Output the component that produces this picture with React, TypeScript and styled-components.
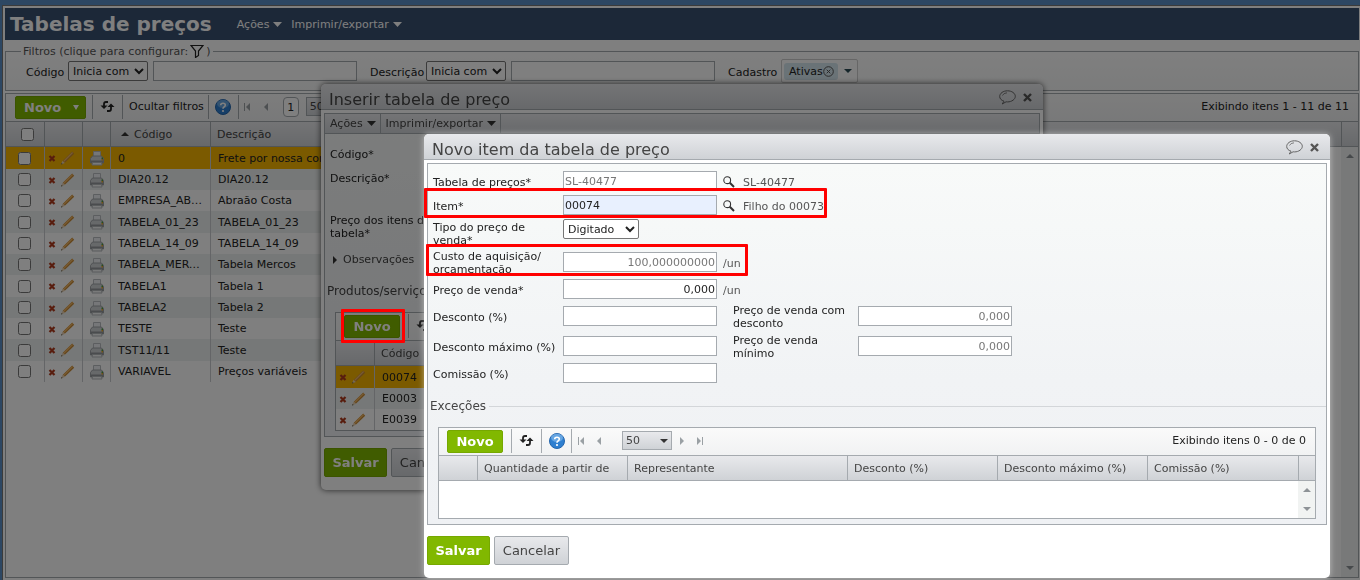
import React from "react";
import styled, { createGlobalStyle, css } from "styled-components";

const line = "#a5aaaf";
const barGradient = "linear-gradient(#e8e9ec, #cfd2d6)";

const GlobalStyle = createGlobalStyle`
  * { box-sizing: border-box; }
  body {
    margin: 0;
    overflow: hidden;
    background: #fff;
    color: #222;
    font: 11px/13px "DejaVu Sans", Verdana, sans-serif;
  }
  button, input, select { font: inherit; color: inherit; }
  input[type="checkbox"] { width: 13px; height: 13px; margin: 0; display: block; }
`;

/* ---------- shared parts ---------- */

const GreenButton = styled.button<{ $big?: boolean; $wide?: boolean }>`
  display: flex;
  align-items: center;
  justify-content: ${(p) => (p.$wide ? "space-between" : "center")};
  width: ${(p) => (p.$big ? 63 : p.$wide ? 71 : 56)}px;
  height: ${(p) => (p.$big ? 29 : 23)}px;
  padding: 0 ${(p) => (p.$wide ? 6 : 0)}px 0 ${(p) => (p.$wide ? 8 : 0)}px;
  border: 1px solid #76a800;
  border-radius: 2px;
  background: #81b800;
  color: #fff;
  font-size: 13px;
  font-weight: bold;
`;

const PlainButton = styled.button`
  width: 75px;
  height: 29px;
  padding: 0;
  border: 1px solid ${line};
  border-radius: 2px;
  background: ${barGradient};
  color: #444;
  font-size: 13px;
`;

const IconButton = styled.button<{ $w?: number }>`
  display: flex;
  align-items: center;
  justify-content: center;
  width: ${(p) => p.$w ?? 17}px;
  height: 22px;
  padding: 0;
  border: 0;
  background: none;
`;

const Toolbar = styled.div`
  display: flex;
  align-items: center;
  height: 27px;
  background: linear-gradient(#fafafa, #f1f2f3);
`;

const ToolGroup = styled.div<{ $pad?: string }>`
  display: flex;
  align-items: center;
  height: 24px;
  margin-bottom: 2px;
  padding: ${(p) => p.$pad ?? "0 6px"};
  border-left: 1px solid ${line};
`;

const ToolStart = styled.div<{ $main?: boolean }>`
  padding: ${(p) => (p.$main ? "0 6px 0 9px" : "0 8px")};
`;

const Counter = styled.span`
  margin-left: auto;
  padding: 0 9px 2px 0;
`;

const PageSize = styled.label<{ $gap: number }>`
  position: relative;
  display: flex;
  width: 50px;
  height: 19px;
  margin: 0 3px 0 ${(p) => p.$gap}px;

  select {
    width: 100%;
    padding: 0 0 0 3px;
    appearance: none;
    border: 1px solid ${line};
    border-radius: 0;
    background: ${barGradient};
    color: #444;
  }
  svg {
    position: absolute;
    right: 4px;
    top: 8px;
    pointer-events: none;
  }
`;

const Grid = styled.div<{ $fill?: boolean }>`
  display: flex;
  flex-direction: column;
  border: 1px solid ${line};
  background: #fff;
  ${(p) => p.$fill && css`flex: 1;`}
`;

const GridBody = styled.div<{ $h?: number }>`
  display: flex;
  align-items: flex-start;
  flex: 1;
  ${(p) => p.$h && css`min-height: ${p.$h}px;`}
`;

const Table = styled.table`
  flex: 1;
  width: 100%;
  table-layout: fixed;
  border-collapse: separate;
  border-spacing: 0;

  th {
    height: 26px;
    padding: 0 0 0 6px;
    border: solid ${line};
    border-width: 1px 1px 1px 0;
    background: ${barGradient};
    color: #444;
    font-weight: normal;
    text-align: left;
  }
  th:last-child { border-right: 0; }
  td {
    height: 21px;
    padding: 0 6px 0 7px;
    border-right: 1px solid #c8cbce;
    overflow: hidden;
    text-overflow: ellipsis;
    white-space: nowrap;
  }
  tbody tr:nth-child(3n + 1) td { height: 22px; }
  tbody tr:nth-child(even) td:not(:empty) { background: #edf1f0; }
  tbody tr:first-child td:not(:empty) { background: #f7b500; }
  td:last-child { border-right: 0; }
`;

const ActionCell = styled.td<{ $left: number }>`
  && { padding: 0 0 0 ${(p) => p.$left}px; }
`;

const ScrollColumn = styled.div`
  display: flex;
  flex-direction: column;
  align-self: stretch;
  width: 17px;
`;

const ScrollCap = styled.div`
  height: 26px;
  border: solid ${line};
  border-width: 1px 0 1px 1px;
  background: ${barGradient};
`;

const ScrollTrack = styled.div`
  display: flex;
  flex: 1;
  flex-direction: column;
  align-items: center;
  justify-content: space-between;
  padding: 7px 0;
  background: #f1f3f2;
`;

const Actions = styled.span<{ $left?: number }>`
  display: flex;
  align-items: center;
  gap: 5px;
  margin-left: ${(p) => p.$left ?? 0}px;
`;

const TextBox = styled.input<{ $soft?: boolean; $number?: boolean; $filled?: boolean }>`
  width: 154px;
  height: 20px;
  padding: 0 1px;
  border: 1px solid ${line};
  background: ${(p) => (p.$filled ? "#e8f0fe" : "#fff")};
  color: ${(p) => (p.$soft ? "#777" : "#222")};
  text-align: ${(p) => (p.$number ? "right" : "left")};
`;

const Select = styled.select<{ $w: number }>`
  width: ${(p) => p.$w}px;
  height: 20px;
  padding: 0;
  border: 1px solid #767676;
  border-radius: 2px;
  background: #fff;
`;

/* ---------- icons ---------- */

const Triangle = ({ dir, w = 8, color = "#333" }: { dir: "up" | "down" | "left" | "right"; w?: number; color?: string }) => {
  const h = w / 2;
  const flat = dir === "up" || dir === "down";
  const points = {
    up: `0,${h} ${h},0 ${w},${h}`,
    down: `0,0 ${w},0 ${h},${h}`,
    left: `${h},0 ${h},${w} 0,${h}`,
    right: `0,0 ${h},${h} 0,${w}`,
  }[dir];
  return (
    <svg width={flat ? w : h} height={flat ? h : w} aria-hidden="true">
      <polygon points={points} fill={color} />
    </svg>
  );
};

const MenuArrow = ({ color = "#333", w = 9 }: { color?: string; w?: number }) => (
  <svg width={w} height="5" viewBox="0 0 9 5" preserveAspectRatio="none" aria-hidden="true">
    <polygon points="0,0 9,0 4.500,5" fill={color} />
  </svg>
);

const EdgeArrow = ({ last }: { last?: boolean }) => (
  <svg width="7" height="8" aria-hidden="true">
    {last ? <path d="M0 0l4 4-4 4zM5 0h1v8H5z" fill="#9aa0a4" /> : <path d="M6 0L2 4l4 4zM0 0h1v8H0z" fill="#9aa0a4" />}
  </svg>
);

const RefreshIcon = () => (
  <svg width="15" height="11" viewBox="0 0 15 11" fill="none" stroke="#222" strokeWidth="1.800" aria-hidden="true">
    <path d="M8 1H6Q4 1 4 3v4" />
    <path d="M0.500 4.500L4 8l3.500-3.500" fill="#222" stroke="none" />
    <path d="M7 10h2q2 0 2-2V4" />
    <path d="M7.500 6L11 2.500 14.500 6" fill="#222" stroke="none" />
  </svg>
);

const HelpIcon = () => (
  <svg width="16" height="16" viewBox="0 0 16 16" aria-hidden="true">
    <circle cx="8" cy="8" r="7.500" fill="#2f7fd0" stroke="#2566ad" />
    <ellipse cx="8" cy="4.800" rx="6" ry="4" fill="#8cc0f0" opacity=".6" />
    <path d="M5.700 6.200Q5.700 4.200 8 4.200t2.300 1.900Q10.300 7.300 9 8q-1 .5-1 1.700" fill="none" stroke="#fff" strokeWidth="1.600" />
    <circle cx="8" cy="12" r="1.100" fill="#fff" />
  </svg>
);

const DeleteIcon = () => (
  <svg width="8" height="8" viewBox="0 0 8 8" aria-hidden="true">
    <path d="M1.500 2l5 5M6.500 2l-5 5" stroke="#b03a1c" strokeWidth="2.200" />
  </svg>
);

const PencilIcon = () => (
  <svg width="14" height="14" viewBox="0 0 14 14" aria-hidden="true">
    <path d="M2.800 10.800L12.200 1.600" stroke="#c98a35" strokeWidth="2.900" />
    <path d="M2.800 10.200L11.600 1.500" stroke="#f0b765" strokeWidth="1.200" />
    <path d="M0 13.500l1.500-3.700 2.300 2.300z" fill="#e9d0b0" />
    <path d="M0 13.500l.7-1.500.9.900z" fill="#443" />
  </svg>
);

const PrinterIcon = () => (
  <svg width="16" height="16" viewBox="0 0 16 16" aria-hidden="true">
    <path d="M4.500 7V1.500h7V7z" fill="#eceff2" stroke="#b8bcc0" />
    <path d="M1.500 8.500L3.500 6h9l2 2.500V13h-13z" fill="#cfd2d5" stroke="#a0a4a8" />
    <path d="M1.500 10.500h13V13h-13z" fill="#95999d" />
    <path d="M3.500 12.500h9l.5 2.500H3z" fill="#f3f4f5" stroke="#b4b8bb" />
    <path d="M12.500 7.500h1.500V9h-1.500z" fill="#4a9a40" />
    <path d="M12.500 9h1.500v1.500h-1.500z" fill="#e0a020" />
  </svg>
);

const FunnelIcon = () => (
  <svg width="14" height="13" viewBox="0 0 14 13" fill="none" stroke="#222" aria-hidden="true">
    <path d="M1 .5h12L8.500 6v4.500l-3 2V6z" strokeWidth="1.200" />
  </svg>
);

const LensIcon = () => (
  <svg width="12" height="12" viewBox="0 0 12 12" fill="none" stroke="#333" aria-hidden="true">
    <circle cx="4.200" cy="4.200" r="3.400" strokeWidth="1.100" />
    <path d="M6.800 6.800L11 11" strokeWidth="2" />
  </svg>
);

const BalloonIcon = () => (
  <svg width="17" height="15" viewBox="0 0 17 15" fill="none" stroke="#666" aria-hidden="true">
    <path d="M5 11.200C2.300 10.400.7 8.600.7 6.500.7 3.300 4.200.8 8.500.8s7.800 2.500 7.800 5.500-3.500 5.600-7.800 5.600c-.5 0-1 0-1.400-.1L3.200 14z" />
    <path d="M3.500 5.500Q4.500 3 8 2.800" strokeWidth=".8" />
  </svg>
);

const CloseIcon = () => (
  <svg width="9" height="9" viewBox="0 0 9 9" aria-hidden="true">
    <path d="M1 1l7 7M8 1L1 8" stroke="#555" strokeWidth="2.400" />
  </svg>
);

const TagRemoveIcon = () => (
  <svg width="11" height="11" viewBox="0 0 11 11" fill="none" stroke="#555" aria-hidden="true">
    <circle cx="5.500" cy="5.500" r="4.800" />
    <path d="M3.700 3.700l3.600 3.600M7.300 3.700L3.700 7.300" />
  </svg>
);

/* ---------- main page ---------- */

const Shell = styled.div`
  display: flex;
  flex-direction: column;
  min-height: 100vh;
  padding: 5px 0 0 2px;
  background: #5b8fc6;
`;

const Page = styled.main`
  display: flex;
  flex: 1;
  flex-direction: column;
  padding: 2px 1px 2px 2px;
  border: solid #777;
  border-width: 1px 0 0 1px;
  background: #fff;
`;

const PageHeader = styled.header`
  display: flex;
  align-items: center;
  height: 32px;
  padding-left: 5px;
  background: #385070;
  color: #fff;
`;

const PageTitle = styled.h1`
  margin: 0 23px 0 0;
  font-size: 20px;
  line-height: 24px;
`;

const MenuButton = styled.button`
  display: flex;
  align-items: center;
  gap: 4px;
  padding: 0 7px 0 2px;
  border: 0;
  background: none;
`;

const Filters = styled.fieldset`
  height: 47px;
  margin: 4px 0 2px;
  padding: 1px 0 0 20px;
  border: 1px solid ${line};
  background: linear-gradient(#fff, #f6f7f7);

  legend {
    display: flex;
    align-items: center;
    gap: 2px;
    height: 14px;
    margin-left: -5px;
    padding: 0 2px;
    color: #555;
  }
`;

const FilterRow = styled.div`
  display: flex;
  align-items: center;
  height: 24px;
  gap: 5px;
`;

const FilterLabel = styled.label<{ $w: number; $gap?: boolean }>`
  width: ${(p) => p.$w}px;
  margin-left: ${(p) => (p.$gap ? 8 : 0)}px;
  padding-top: 2px;
  white-space: nowrap;
`;

const FilterInput = styled(TextBox)`
  width: 204px;
`;

const TagBox = styled.div`
  display: flex;
  align-items: center;
  gap: 6px;
  width: 77px;
  height: 24px;
  padding: 2px;
  border: 1px solid #ccc;
  border-radius: 2px;
  background: #fff;
`;

const Tag = styled.span`
  display: flex;
  align-items: center;
  height: 17px;
  padding: 0 4px 0 5px;
  border-radius: 3px;
  background: #d5e6ee;
`;

const PageNumber = styled.span`
  width: 16px;
  height: 20px;
  margin-left: 6px;
  border: 1px solid ${line};
  border-radius: 4px;
  background: #fff;
  line-height: 20px;
  text-align: center;
`;

const SortHeader = styled.span`
  display: flex;
  align-items: center;
  gap: 5px;
  padding-left: 4px;
`;

/* ---------- dialogs ---------- */

const Backdrop = styled.div`
  position: fixed;
  inset: 0;
  background: rgba(0, 0, 0, 0.5);
`;

const Dialog = styled.section`
  position: fixed;
  padding-bottom: 13px;
  border-radius: 5px;
  background: #fff;
`;

const PriceTableDialog = styled(Dialog)`
  top: 84px;
  left: 321px;
  width: 722px;
  box-shadow: 0 0 6px rgba(0, 0, 0, 0.7);
`;

const ItemDialog = styled(Dialog)`
  top: 134px;
  left: 424px;
  right: 30px;
  box-shadow: 0 0 6px rgba(255, 255, 255, 0.5);
`;

const DialogTitle = styled.header`
  display: flex;
  align-items: center;
  height: 26px;
  padding: 2px 5px 0 8px;
  border-bottom: 1px solid ${line};
  border-radius: 5px 5px 0 0;
  background: ${barGradient};
  color: #444;

  h2 {
    flex: 1;
    margin: 0;
    padding-top: 4px;
    font-size: 16px;
    font-weight: normal;
    line-height: 20px;
  }
`;

const DialogPanel = styled.div<{ $h: number }>`
  min-height: ${(p) => p.$h}px;
  margin: 3px 3px 0;
  border: 1px solid ${line};
  background: linear-gradient(#f8faf9, #f1f3f5 60%, #eff1f4);
`;

const DialogFooter = styled.footer`
  display: flex;
  gap: 4px;
  padding: 11px 3px 0;
`;

const MenuBar = styled.nav`
  display: flex;
  height: 20px;
  border-bottom: 1px solid ${line};
  background: ${barGradient};

  button {
    padding: 0 4px 0 5px;
    border-right: 1px solid ${line};
    color: #444;
  }
`;

const Stack = styled.div`
  display: flex;
  flex-direction: column;
  padding: 14px 6px 0 5px;

  label { width: 120px; margin-bottom: 11px; }
  label:nth-child(3) { margin: 18px 0 13px; }
`;

const Disclosure = styled.button`
  display: flex;
  align-items: center;
  gap: 6px;
  padding: 0 0 0 3px;
  border: 0;
  background: none;
  color: #444;
`;

const SectionTitle = styled.h3<{ $top: number }>`
  display: flex;
  align-items: center;
  gap: 3px;
  margin: ${(p) => p.$top}px 0 0 2px;
  color: #444;
  font-size: 12px;
  font-weight: normal;
  line-height: 16px;

  &::after {
    content: "";
    flex: 1;
    border-top: 1px solid #d3d6d9;
  }
`;

const Inset = styled.div`
  padding: 13px 10px 5px;
`;

const Form = styled.form`
  display: flex;
  flex-direction: column;
  gap: 4px;
  padding: 7px 5px 0;
`;

const Field = styled.div<{ $tall?: boolean; $top?: boolean }>`
  display: flex;
  align-items: ${(p) => (p.$top ? "flex-start" : "center")};
  height: ${(p) => (p.$tall ? 26 : 20)}px;
`;

const FieldLabel = styled.label<{ $second?: boolean }>`
  width: ${(p) => (p.$second ? 125 : 130)}px;
  margin-left: ${(p) => (p.$second ? 16 : 0)}px;
  padding: ${(p) => (p.$second ? "2px 10px 0 0" : "2px 4px 0 0")};
`;

const FieldHint = styled.span`
  display: flex;
  align-items: center;
  gap: 8px;
  margin-left: 6px;
  padding-top: 2px;
  color: #555;
`;

/* Red frames that call attention to a step of the walkthrough. */
const Highlight = styled.div<{ $x: number; $y: number; $w: number; $h: number }>`
  position: fixed;
  left: ${(p) => p.$x}px;
  top: ${(p) => p.$y}px;
  width: ${(p) => p.$w}px;
  height: ${(p) => p.$h}px;
  border: 3px solid #f00;
  border-radius: 1px;
  pointer-events: none;
`;

/* ---------- composed pieces ---------- */

const rows = [
  ["0", "Frete por nossa conta"],
  ["DIA20.12", "DIA20.12"],
  ["EMPRESA_ABRAAO", "Abraão Costa"],
  ["TABELA_01_23", "TABELA_01_23"],
  ["TABELA_14_09", "TABELA_14_09"],
  ["TABELA_MERCOS", "Tabela Mercos"],
  ["TABELA1", "Tabela 1"],
  ["TABELA2", "Tabela 2"],
  ["TESTE", "Teste"],
  ["TST11/11", "Teste"],
  ["VARIAVEL", "Preços variáveis"],
];

const products = ["00074", "E0003", "E0039"];

const Scroll = () => (
  <ScrollColumn>
    <ScrollCap />
    <ScrollTrack>
      <Triangle dir="up" color="#8d9296" />
      <Triangle dir="down" color="#8d9296" />
    </ScrollTrack>
  </ScrollColumn>
);

const PagerStart = () => (
  <>
    <IconButton aria-label="Primeira página" $w={14}><EdgeArrow /></IconButton>
    <IconButton aria-label="Página anterior" $w={22}><Triangle dir="left" color="#9aa0a4" /></IconButton>
  </>
);

const PageSizeSelect = ({ gap }: { gap: number }) => (
  <PageSize $gap={gap}>
    <select aria-label="Itens por página"><option>50</option></select>
    <Triangle dir="down" />
  </PageSize>
);

const RowActions = () => (
  <Actions>
    <DeleteIcon />
    <PencilIcon />
  </Actions>
);

const TitleBar = ({ children }: { children: React.ReactNode }) => (
  <DialogTitle>
    <h2>{children}</h2>
    <IconButton aria-label="Comentar"><BalloonIcon /></IconButton>
    <IconButton aria-label="Fechar" $w={22}><CloseIcon /></IconButton>
  </DialogTitle>
);

const MainPage = () => (
  <Shell>
    <Page>
      <PageHeader>
        <PageTitle>Tabelas de preços</PageTitle>
        <MenuButton>Ações <MenuArrow color="#fff" /></MenuButton>
        <MenuButton>Imprimir/exportar <MenuArrow color="#fff" /></MenuButton>
      </PageHeader>
      <Filters>
        <legend>Filtros (clique para configurar: <FunnelIcon /> )</legend>
        <FilterRow>
          <FilterLabel $w={37} htmlFor="codigo">Código</FilterLabel>
          <Select $w={80} aria-label="Operador do código"><option>Inicia com</option></Select>
          <FilterInput id="codigo" />
          <FilterLabel $w={51} $gap htmlFor="descricao">Descrição</FilterLabel>
          <Select $w={80} aria-label="Operador da descrição"><option>Inicia com</option></Select>
          <FilterInput id="descricao" />
          <FilterLabel $w={48} $gap as="span">Cadastro</FilterLabel>
          <TagBox>
            <Tag>Ativas <TagRemoveIcon /></Tag>
            <Triangle dir="down" color="#2b4a55" />
          </TagBox>
        </FilterRow>
      </Filters>
      <Grid $fill>
        <Toolbar>
          <ToolStart $main><GreenButton $wide>Novo <MenuArrow w={6} color="#fff" /></GreenButton></ToolStart>
          <ToolGroup><IconButton aria-label="Atualizar"><RefreshIcon /></IconButton></ToolGroup>
          <ToolGroup $pad="0 4px 0 6px"><span>Ocultar filtros</span></ToolGroup>
          <ToolGroup><IconButton aria-label="Ajuda"><HelpIcon /></IconButton></ToolGroup>
          <ToolGroup $pad="0 2px">
            <PagerStart />
            <PageNumber>1</PageNumber>
            <PageSizeSelect gap={7} />
          </ToolGroup>
          <Counter>Exibindo itens 1 - 11 de 11</Counter>
        </Toolbar>
        <GridBody>
          <Table>
            <colgroup>
              <col style={{ width: 39 }} /><col style={{ width: 38 }} /><col style={{ width: 28 }} />
              <col style={{ width: 100 }} /><col style={{ width: 700 }} /><col />
            </colgroup>
            <thead>
              <tr>
                <th><Actions $left={9}><input type="checkbox" aria-label="Selecionar todas" /></Actions></th>
                <th />
                <th />
                <th><SortHeader><Triangle dir="up" />Código</SortHeader></th>
                <th colSpan={2}>Descrição</th>
              </tr>
            </thead>
            <tbody>
              {rows.map(([code, name]) => (
                <tr key={code}>
                  <ActionCell $left={12}><input type="checkbox" aria-label={`Selecionar ${code}`} /></ActionCell>
                  <ActionCell $left={3}><RowActions /></ActionCell>
                  <ActionCell $left={6}><Actions><PrinterIcon /></Actions></ActionCell>
                  <td>{code}</td>
                  <td>{name}</td>
                  <td />
                </tr>
              ))}
            </tbody>
          </Table>
          <Scroll />
        </GridBody>
      </Grid>
    </Page>
  </Shell>
);

const InsertTableDialog = () => (
  <PriceTableDialog role="dialog" aria-label="Inserir tabela de preço">
    <TitleBar>Inserir tabela de preço</TitleBar>
    <DialogPanel $h={323}>
      <MenuBar>
        <MenuButton>Ações <MenuArrow /></MenuButton>
        <MenuButton>Imprimir/exportar <MenuArrow /></MenuButton>
      </MenuBar>
      <Stack>
        <label>Código*</label>
        <label>Descrição*</label>
        <label>Preço dos itens da tabela*</label>
        <Disclosure><Triangle dir="right" />Observações</Disclosure>
      </Stack>
      <SectionTitle $top={17}>Produtos/serviços</SectionTitle>
      <Inset>
        <Grid>
          <Toolbar>
            <ToolStart><GreenButton>Novo</GreenButton></ToolStart>
            <ToolGroup><IconButton aria-label="Atualizar"><RefreshIcon /></IconButton></ToolGroup>
          </Toolbar>
          <GridBody>
            <Table>
              <colgroup><col style={{ width: 39 }} /><col /></colgroup>
              <thead><tr><th /><th>Código</th></tr></thead>
              <tbody>
                {products.map((code) => (
                  <tr key={code}>
                    <ActionCell $left={3}><RowActions /></ActionCell>
                    <td>{code}</td>
                  </tr>
                ))}
              </tbody>
            </Table>
          </GridBody>
        </Grid>
      </Inset>
    </DialogPanel>
    <DialogFooter>
      <GreenButton $big>Salvar</GreenButton>
      <PlainButton>Cancelar</PlainButton>
    </DialogFooter>
  </PriceTableDialog>
);

const NewItemDialog = () => (
  <ItemDialog role="dialog" aria-label="Novo item da tabela de preço">
    <TitleBar>Novo item da tabela de preço</TitleBar>
    <DialogPanel $h={361}>
      <Form>
        <Field>
          <FieldLabel htmlFor="tabela">Tabela de preços*</FieldLabel>
          <TextBox id="tabela" $soft defaultValue="SL-40477" />
          <FieldHint><LensIcon />SL-40477</FieldHint>
        </Field>
        <Field>
          <FieldLabel htmlFor="item">Item*</FieldLabel>
          <TextBox id="item" $filled defaultValue="00074" />
          <FieldHint><LensIcon />Filho do 00073</FieldHint>
        </Field>
        <Field $tall $top>
          <FieldLabel htmlFor="tipo">Tipo do preço de venda*</FieldLabel>
          <Select id="tipo" $w={76}><option>Digitado</option></Select>
        </Field>
        <Field $tall>
          <FieldLabel htmlFor="custo">Custo de aquisição/ orçamentação</FieldLabel>
          <TextBox id="custo" $soft $number defaultValue="100,000000000" />
          <FieldHint>/un</FieldHint>
        </Field>
        <Field>
          <FieldLabel htmlFor="venda">Preço de venda*</FieldLabel>
          <TextBox id="venda" $number defaultValue="0,000" />
          <FieldHint>/un</FieldHint>
        </Field>
        <Field $tall>
          <FieldLabel htmlFor="desconto">Desconto (%)</FieldLabel>
          <TextBox id="desconto" />
          <FieldLabel $second htmlFor="vendaDesconto">Preço de venda com desconto</FieldLabel>
          <TextBox id="vendaDesconto" $soft $number defaultValue="0,000" />
        </Field>
        <Field $tall>
          <FieldLabel htmlFor="descontoMax">Desconto máximo (%)</FieldLabel>
          <TextBox id="descontoMax" />
          <FieldLabel $second htmlFor="vendaMin">Preço de venda mínimo</FieldLabel>
          <TextBox id="vendaMin" $soft $number defaultValue="0,000" />
        </Field>
        <Field>
          <FieldLabel htmlFor="comissao">Comissão (%)</FieldLabel>
          <TextBox id="comissao" />
        </Field>
      </Form>
      <SectionTitle $top={15}>Exceções</SectionTitle>
      <Inset>
        <Grid>
          <Toolbar>
            <ToolStart><GreenButton>Novo</GreenButton></ToolStart>
            <ToolGroup><IconButton aria-label="Atualizar"><RefreshIcon /></IconButton></ToolGroup>
            <ToolGroup><IconButton aria-label="Ajuda"><HelpIcon /></IconButton></ToolGroup>
            <ToolGroup $pad="0 2px">
              <PagerStart />
              <PageSizeSelect gap={12} />
              <IconButton aria-label="Próxima página" $w={14}><Triangle dir="right" color="#9aa0a4" /></IconButton>
              <IconButton aria-label="Última página" $w={22}><EdgeArrow last /></IconButton>
            </ToolGroup>
            <Counter>Exibindo itens 0 - 0 de 0</Counter>
          </Toolbar>
          <GridBody $h={63}>
            <Table>
              <colgroup>
                <col style={{ width: 39 }} /><col style={{ width: 150 }} /><col />
                <col style={{ width: 150 }} /><col style={{ width: 150 }} /><col style={{ width: 150 }} />
              </colgroup>
              <thead>
                <tr>
                  <th /><th>Quantidade a partir de</th><th>Representante</th>
                  <th>Desconto (%)</th><th>Desconto máximo (%)</th><th>Comissão (%)</th>
                </tr>
              </thead>
            </Table>
            <Scroll />
          </GridBody>
        </Grid>
      </Inset>
    </DialogPanel>
    <DialogFooter>
      <GreenButton $big>Salvar</GreenButton>
      <PlainButton>Cancelar</PlainButton>
    </DialogFooter>
  </ItemDialog>
);

export default function App() {
  return (
    <>
      <GlobalStyle />
      <MainPage />
      <InsertTableDialog />
      <Backdrop />
      <NewItemDialog />
      <Highlight $x={341} $y={309} $w={64} $h={34} />
      <Highlight $x={424} $y={188} $w={403} $h={30} />
      <Highlight $x={426} $y={244} $w={322} $h={32} />
    </>
  );
}
